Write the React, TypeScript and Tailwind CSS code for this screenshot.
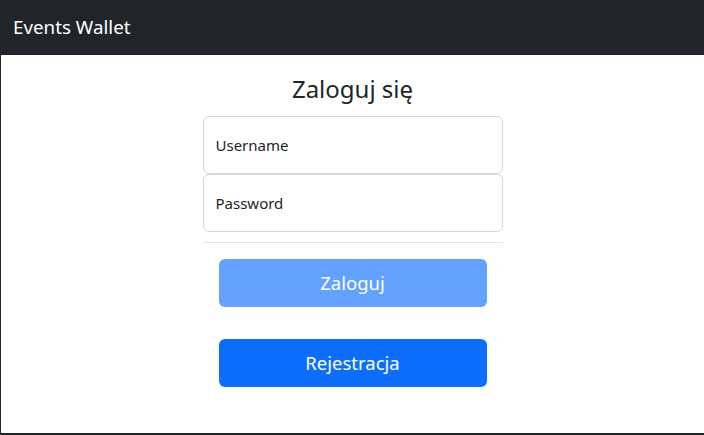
import { useState } from "react";

const font = { fontFamily: '"Noto Sans", "Open Sans", Arial, sans-serif' };

const Navbar = () => (
  <nav className="h-[55px] bg-[#212529] flex items-center px-[13px]">
    <span className="text-white text-[18.8px] leading-none">Events Wallet</span>
  </nav>
);

const FloatingInput = ({ placeholder, type = "text" }: { placeholder: string; type?: string }) => {
  const [value, setValue] = useState("");
  return (
    <input
      type={type}
      value={value}
      onChange={(e) => setValue(e.target.value)}
      placeholder={placeholder}
      className="block w-full h-[58px] px-[12px] text-[15px] text-[#212529] placeholder:text-[#212529] border border-[#d3d6da] rounded-[6px] bg-white outline-none"
    />
  );
};

export default function App() {
  return (
    <div className="h-[435px] flex flex-col bg-white overflow-hidden" style={font}>
      <Navbar />
      <main className="flex-1 border-l border-b-2 border-[#212529] flex flex-col items-center">
        <h3 className="mt-[17px] text-[24px] leading-[34px] text-[#212529] font-normal">Zaloguj się</h3>
        <form className="mt-[10px] w-[300px] flex flex-col" onSubmit={(e) => e.preventDefault()}>
          <FloatingInput placeholder="Username" />
          <FloatingInput placeholder="Password" type="password" />
          <hr className="mt-[10px] border-t border-[#e2e3e5]" />
          <div className="px-[16px] flex flex-col gap-[32px] mt-[16px]">
            <button
              type="submit"
              disabled
              className="h-[48px] rounded-[6px] bg-[#62a1fe] text-white text-[18.5px]"
            >
              Zaloguj
            </button>
            <button type="button" className="h-[48px] rounded-[6px] bg-[#0d6efd] text-white text-[18.5px]">
              Rejestracja
            </button>
          </div>
        </form>
      </main>
    </div>
  );
}
